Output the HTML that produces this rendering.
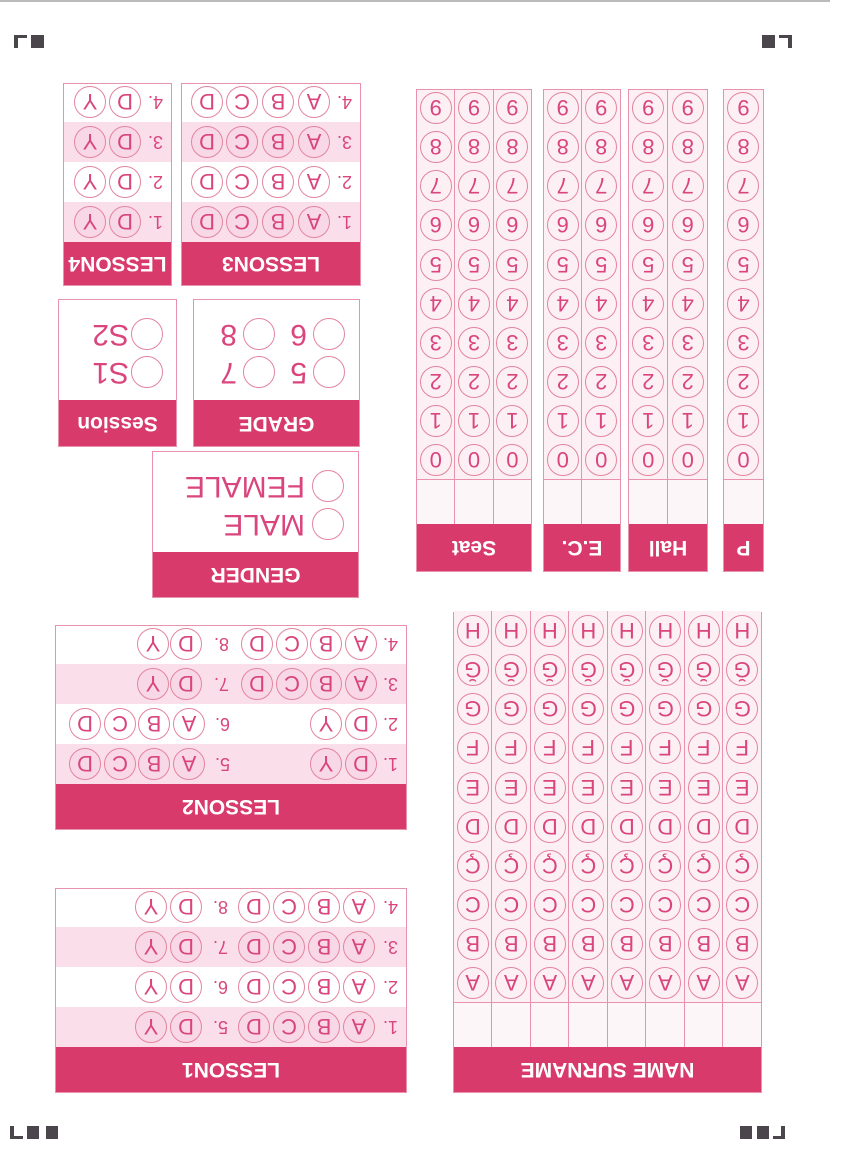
<!DOCTYPE html>
<html><head><meta charset="utf-8">
<style>
*{box-sizing:border-box;margin:0;padding:0}
body{width:852px;height:1170px;background:#fff;position:relative;overflow:hidden;font-family:"Liberation Sans",Arial,sans-serif}
.m{position:absolute;background:#4a464c}
.blk{position:absolute;transform:rotate(180deg);border:1px solid #e892ae;background:#fff}
.hd{background:#d93a6c;color:#fff;font-weight:bold;font-size:21px;text-align:center;display:flex;align-items:center;justify-content:center}
.row{position:relative;height:40px}
.pk{background:#fadfeb}
.b{position:absolute;width:32px;height:32px;top:4px;margin-left:-16px;border:1px solid #e3849f;border-radius:50%;text-align:center;line-height:31px;font-size:22px;color:#d9457c}
.pk .b{background:#f8d8e6}
.n{position:absolute;top:10px;font-size:18px;color:#d9457c}
.cols{display:flex;height:calc(100% - 47px)}
.col{flex:1;border-right:1px solid #e892ae;background:#fcf0f5}
.col:last-child{border-right:none}
.bl{height:45px;border-bottom:1px solid #e892ae;background:#fdf6f9}
.c{height:39.1px;position:relative}
.c .b{left:50%;top:3px}
.o{position:absolute;width:32px;height:32px;margin-left:-16px;margin-top:-16px;border:1px solid #e3849f;border-radius:50%}
.t{position:absolute;font-size:30px;color:#d9457c;line-height:30px;margin-top:-15px}
</style></head><body>
<div style="position:absolute;left:0;top:0;width:830px;height:2px;background:#bbb"></div>
<div class="m" style="left:14px;top:35px;width:4px;height:13px"></div>
<div class="m" style="left:14px;top:35px;width:13px;height:3px"></div>
<div class="m" style="left:31px;top:35px;width:13px;height:13px"></div>
<div class="m" style="left:762px;top:35px;width:13px;height:13px"></div>
<div class="m" style="left:779px;top:35px;width:13px;height:3px"></div>
<div class="m" style="left:788px;top:35px;width:4px;height:13px"></div>
<div class="m" style="left:10px;top:1126px;width:4px;height:13px"></div>
<div class="m" style="left:10px;top:1136px;width:13px;height:3px"></div>
<div class="m" style="left:27px;top:1126px;width:12px;height:13px"></div>
<div class="m" style="left:46px;top:1126px;width:12px;height:13px"></div>
<div class="m" style="left:740px;top:1126px;width:12px;height:13px"></div>
<div class="m" style="left:757px;top:1126px;width:12px;height:13px"></div>
<div class="m" style="left:781px;top:1126px;width:4px;height:13px"></div>
<div class="m" style="left:773px;top:1136px;width:12px;height:3px"></div>

<div class="blk" style="left:416px;top:89px;width:116px;height:483px">
<div class="hd" style="height:47px">Seat</div>
<div class="cols">
<div class="col"><div class="bl"></div><div class="c"><div class="b">0</div></div><div class="c"><div class="b">1</div></div><div class="c"><div class="b">2</div></div><div class="c"><div class="b">3</div></div><div class="c"><div class="b">4</div></div><div class="c"><div class="b">5</div></div><div class="c"><div class="b">6</div></div><div class="c"><div class="b">7</div></div><div class="c"><div class="b">8</div></div><div class="c"><div class="b">9</div></div></div>
<div class="col"><div class="bl"></div><div class="c"><div class="b">0</div></div><div class="c"><div class="b">1</div></div><div class="c"><div class="b">2</div></div><div class="c"><div class="b">3</div></div><div class="c"><div class="b">4</div></div><div class="c"><div class="b">5</div></div><div class="c"><div class="b">6</div></div><div class="c"><div class="b">7</div></div><div class="c"><div class="b">8</div></div><div class="c"><div class="b">9</div></div></div>
<div class="col"><div class="bl"></div><div class="c"><div class="b">0</div></div><div class="c"><div class="b">1</div></div><div class="c"><div class="b">2</div></div><div class="c"><div class="b">3</div></div><div class="c"><div class="b">4</div></div><div class="c"><div class="b">5</div></div><div class="c"><div class="b">6</div></div><div class="c"><div class="b">7</div></div><div class="c"><div class="b">8</div></div><div class="c"><div class="b">9</div></div></div>
</div></div>
<div class="blk" style="left:543px;top:89px;width:78px;height:483px">
<div class="hd" style="height:47px">E.C.</div>
<div class="cols">
<div class="col"><div class="bl"></div><div class="c"><div class="b">0</div></div><div class="c"><div class="b">1</div></div><div class="c"><div class="b">2</div></div><div class="c"><div class="b">3</div></div><div class="c"><div class="b">4</div></div><div class="c"><div class="b">5</div></div><div class="c"><div class="b">6</div></div><div class="c"><div class="b">7</div></div><div class="c"><div class="b">8</div></div><div class="c"><div class="b">9</div></div></div>
<div class="col"><div class="bl"></div><div class="c"><div class="b">0</div></div><div class="c"><div class="b">1</div></div><div class="c"><div class="b">2</div></div><div class="c"><div class="b">3</div></div><div class="c"><div class="b">4</div></div><div class="c"><div class="b">5</div></div><div class="c"><div class="b">6</div></div><div class="c"><div class="b">7</div></div><div class="c"><div class="b">8</div></div><div class="c"><div class="b">9</div></div></div>
</div></div>
<div class="blk" style="left:628px;top:89px;width:80px;height:483px">
<div class="hd" style="height:47px">Hall</div>
<div class="cols">
<div class="col"><div class="bl"></div><div class="c"><div class="b">0</div></div><div class="c"><div class="b">1</div></div><div class="c"><div class="b">2</div></div><div class="c"><div class="b">3</div></div><div class="c"><div class="b">4</div></div><div class="c"><div class="b">5</div></div><div class="c"><div class="b">6</div></div><div class="c"><div class="b">7</div></div><div class="c"><div class="b">8</div></div><div class="c"><div class="b">9</div></div></div>
<div class="col"><div class="bl"></div><div class="c"><div class="b">0</div></div><div class="c"><div class="b">1</div></div><div class="c"><div class="b">2</div></div><div class="c"><div class="b">3</div></div><div class="c"><div class="b">4</div></div><div class="c"><div class="b">5</div></div><div class="c"><div class="b">6</div></div><div class="c"><div class="b">7</div></div><div class="c"><div class="b">8</div></div><div class="c"><div class="b">9</div></div></div>
</div></div>
<div class="blk" style="left:723px;top:89px;width:41px;height:483px">
<div class="hd" style="height:47px">P</div>
<div class="cols">
<div class="col"><div class="bl"></div><div class="c"><div class="b">0</div></div><div class="c"><div class="b">1</div></div><div class="c"><div class="b">2</div></div><div class="c"><div class="b">3</div></div><div class="c"><div class="b">4</div></div><div class="c"><div class="b">5</div></div><div class="c"><div class="b">6</div></div><div class="c"><div class="b">7</div></div><div class="c"><div class="b">8</div></div><div class="c"><div class="b">9</div></div></div>
</div></div>

<div class="blk" style="left:453px;top:612px;width:309px;height:481px">
<div class="hd" style="height:45px">NAME SURNAME</div>
<div class="cols" style="height:436px">
<div class="col"><div class="bl"></div><div class="c"><div class="b">A</div></div><div class="c"><div class="b">B</div></div><div class="c"><div class="b">C</div></div><div class="c"><div class="b">Ç</div></div><div class="c"><div class="b">D</div></div><div class="c"><div class="b">E</div></div><div class="c"><div class="b">F</div></div><div class="c"><div class="b">G</div></div><div class="c"><div class="b">Ğ</div></div><div class="c"><div class="b">H</div></div></div>
<div class="col"><div class="bl"></div><div class="c"><div class="b">A</div></div><div class="c"><div class="b">B</div></div><div class="c"><div class="b">C</div></div><div class="c"><div class="b">Ç</div></div><div class="c"><div class="b">D</div></div><div class="c"><div class="b">E</div></div><div class="c"><div class="b">F</div></div><div class="c"><div class="b">G</div></div><div class="c"><div class="b">Ğ</div></div><div class="c"><div class="b">H</div></div></div>
<div class="col"><div class="bl"></div><div class="c"><div class="b">A</div></div><div class="c"><div class="b">B</div></div><div class="c"><div class="b">C</div></div><div class="c"><div class="b">Ç</div></div><div class="c"><div class="b">D</div></div><div class="c"><div class="b">E</div></div><div class="c"><div class="b">F</div></div><div class="c"><div class="b">G</div></div><div class="c"><div class="b">Ğ</div></div><div class="c"><div class="b">H</div></div></div>
<div class="col"><div class="bl"></div><div class="c"><div class="b">A</div></div><div class="c"><div class="b">B</div></div><div class="c"><div class="b">C</div></div><div class="c"><div class="b">Ç</div></div><div class="c"><div class="b">D</div></div><div class="c"><div class="b">E</div></div><div class="c"><div class="b">F</div></div><div class="c"><div class="b">G</div></div><div class="c"><div class="b">Ğ</div></div><div class="c"><div class="b">H</div></div></div>
<div class="col"><div class="bl"></div><div class="c"><div class="b">A</div></div><div class="c"><div class="b">B</div></div><div class="c"><div class="b">C</div></div><div class="c"><div class="b">Ç</div></div><div class="c"><div class="b">D</div></div><div class="c"><div class="b">E</div></div><div class="c"><div class="b">F</div></div><div class="c"><div class="b">G</div></div><div class="c"><div class="b">Ğ</div></div><div class="c"><div class="b">H</div></div></div>
<div class="col"><div class="bl"></div><div class="c"><div class="b">A</div></div><div class="c"><div class="b">B</div></div><div class="c"><div class="b">C</div></div><div class="c"><div class="b">Ç</div></div><div class="c"><div class="b">D</div></div><div class="c"><div class="b">E</div></div><div class="c"><div class="b">F</div></div><div class="c"><div class="b">G</div></div><div class="c"><div class="b">Ğ</div></div><div class="c"><div class="b">H</div></div></div>
<div class="col"><div class="bl"></div><div class="c"><div class="b">A</div></div><div class="c"><div class="b">B</div></div><div class="c"><div class="b">C</div></div><div class="c"><div class="b">Ç</div></div><div class="c"><div class="b">D</div></div><div class="c"><div class="b">E</div></div><div class="c"><div class="b">F</div></div><div class="c"><div class="b">G</div></div><div class="c"><div class="b">Ğ</div></div><div class="c"><div class="b">H</div></div></div>
<div class="col"><div class="bl"></div><div class="c"><div class="b">A</div></div><div class="c"><div class="b">B</div></div><div class="c"><div class="b">C</div></div><div class="c"><div class="b">Ç</div></div><div class="c"><div class="b">D</div></div><div class="c"><div class="b">E</div></div><div class="c"><div class="b">F</div></div><div class="c"><div class="b">G</div></div><div class="c"><div class="b">Ğ</div></div><div class="c"><div class="b">H</div></div></div>
</div></div>

<div class="blk" style="left:63px;top:83px;width:109px;height:203px">
<div class="hd" style="height:43px">LESSON4</div>
<div class="row pk"><span class="n" style="left:8px">1.</span><div class="b" style="left:46px">D</div><div class="b" style="left:81px">Y</div></div>
<div class="row"><span class="n" style="left:8px">2.</span><div class="b" style="left:46px">D</div><div class="b" style="left:81px">Y</div></div>
<div class="row pk"><span class="n" style="left:8px">3.</span><div class="b" style="left:46px">D</div><div class="b" style="left:81px">Y</div></div>
<div class="row"><span class="n" style="left:8px">4.</span><div class="b" style="left:46px">D</div><div class="b" style="left:81px">Y</div></div>
</div>
<div class="blk" style="left:181px;top:83px;width:180px;height:203px">
<div class="hd" style="height:43px">LESSON3</div>
<div class="row pk"><span class="n" style="left:8px">1.</span><div class="b" style="left:46px">A</div><div class="b" style="left:82px">B</div><div class="b" style="left:118px">C</div><div class="b" style="left:153px">D</div></div>
<div class="row"><span class="n" style="left:8px">2.</span><div class="b" style="left:46px">A</div><div class="b" style="left:82px">B</div><div class="b" style="left:118px">C</div><div class="b" style="left:153px">D</div></div>
<div class="row pk"><span class="n" style="left:8px">3.</span><div class="b" style="left:46px">A</div><div class="b" style="left:82px">B</div><div class="b" style="left:118px">C</div><div class="b" style="left:153px">D</div></div>
<div class="row"><span class="n" style="left:8px">4.</span><div class="b" style="left:46px">A</div><div class="b" style="left:82px">B</div><div class="b" style="left:118px">C</div><div class="b" style="left:153px">D</div></div>
</div>

<div class="blk" style="left:58px;top:299px;width:119px;height:148px">
<div class="hd" style="height:46px">Session</div>
<div style="position:relative;height:100px">
<div class="o" style="left:29px;top:28px"></div><span class="t" style="left:47px;top:28px">S1</span>
<div class="o" style="left:29px;top:66px"></div><span class="t" style="left:47px;top:66px">S2</span>
</div></div>
<div class="blk" style="left:193px;top:299px;width:167px;height:148px">
<div class="hd" style="height:46px">GRADE</div>
<div style="position:relative;height:100px">
<div class="o" style="left:30px;top:28px"></div><span class="t" style="left:52px;top:28px">5</span>
<div class="o" style="left:100px;top:28px"></div><span class="t" style="left:122px;top:28px">7</span>
<div class="o" style="left:30px;top:66px"></div><span class="t" style="left:52px;top:66px">6</span>
<div class="o" style="left:100px;top:66px"></div><span class="t" style="left:122px;top:66px">8</span>
</div></div>
<div class="blk" style="left:152px;top:451px;width:207px;height:147px">
<div class="hd" style="height:45px">GENDER</div>
<div style="position:relative;height:100px">
<div class="o" style="left:30px;top:28px"></div><span class="t" style="left:53px;top:28px">MALE</span>
<div class="o" style="left:30px;top:66px"></div><span class="t" style="left:53px;top:66px">FEMALE</span>
</div></div>

<div class="blk" style="left:55px;top:625px;width:352px;height:205px">
<div class="hd" style="height:45px">LESSON2</div>
<div class="row pk"><span class="n" style="left:8px">1.</span><div class="b" style="left:45px">D</div><div class="b" style="left:80px">Y</div><span class="n" style="left:176px">5.</span><div class="b" style="left:217px">A</div><div class="b" style="left:252px">B</div><div class="b" style="left:286px">C</div><div class="b" style="left:321px">D</div></div>
<div class="row"><span class="n" style="left:8px">2.</span><div class="b" style="left:45px">D</div><div class="b" style="left:80px">Y</div><span class="n" style="left:176px">6.</span><div class="b" style="left:217px">A</div><div class="b" style="left:252px">B</div><div class="b" style="left:286px">C</div><div class="b" style="left:321px">D</div></div>
<div class="row pk"><span class="n" style="left:8px">3.</span><div class="b" style="left:45px">A</div><div class="b" style="left:80px">B</div><div class="b" style="left:114px">C</div><div class="b" style="left:149px">D</div><span class="n" style="left:177px">7.</span><div class="b" style="left:220px">D</div><div class="b" style="left:253px">Y</div></div>
<div class="row"><span class="n" style="left:8px">4.</span><div class="b" style="left:45px">A</div><div class="b" style="left:80px">B</div><div class="b" style="left:114px">C</div><div class="b" style="left:149px">D</div><span class="n" style="left:177px">8.</span><div class="b" style="left:220px">D</div><div class="b" style="left:253px">Y</div></div>
</div>
<div class="blk" style="left:55px;top:888px;width:352px;height:205px">
<div class="hd" style="height:45px">LESSON1</div>
<div class="row pk"><span class="n" style="left:8px">1.</span><div class="b" style="left:47px">A</div><div class="b" style="left:82px">B</div><div class="b" style="left:117px">C</div><div class="b" style="left:152px">D</div><span class="n" style="left:178px">5.</span><div class="b" style="left:220px">D</div><div class="b" style="left:255px">Y</div></div>
<div class="row"><span class="n" style="left:8px">2.</span><div class="b" style="left:47px">A</div><div class="b" style="left:82px">B</div><div class="b" style="left:117px">C</div><div class="b" style="left:152px">D</div><span class="n" style="left:178px">6.</span><div class="b" style="left:220px">D</div><div class="b" style="left:255px">Y</div></div>
<div class="row pk"><span class="n" style="left:8px">3.</span><div class="b" style="left:47px">A</div><div class="b" style="left:82px">B</div><div class="b" style="left:117px">C</div><div class="b" style="left:152px">D</div><span class="n" style="left:178px">7.</span><div class="b" style="left:220px">D</div><div class="b" style="left:255px">Y</div></div>
<div class="row"><span class="n" style="left:8px">4.</span><div class="b" style="left:47px">A</div><div class="b" style="left:82px">B</div><div class="b" style="left:117px">C</div><div class="b" style="left:152px">D</div><span class="n" style="left:178px">8.</span><div class="b" style="left:220px">D</div><div class="b" style="left:255px">Y</div></div>
</div>
</body></html>
